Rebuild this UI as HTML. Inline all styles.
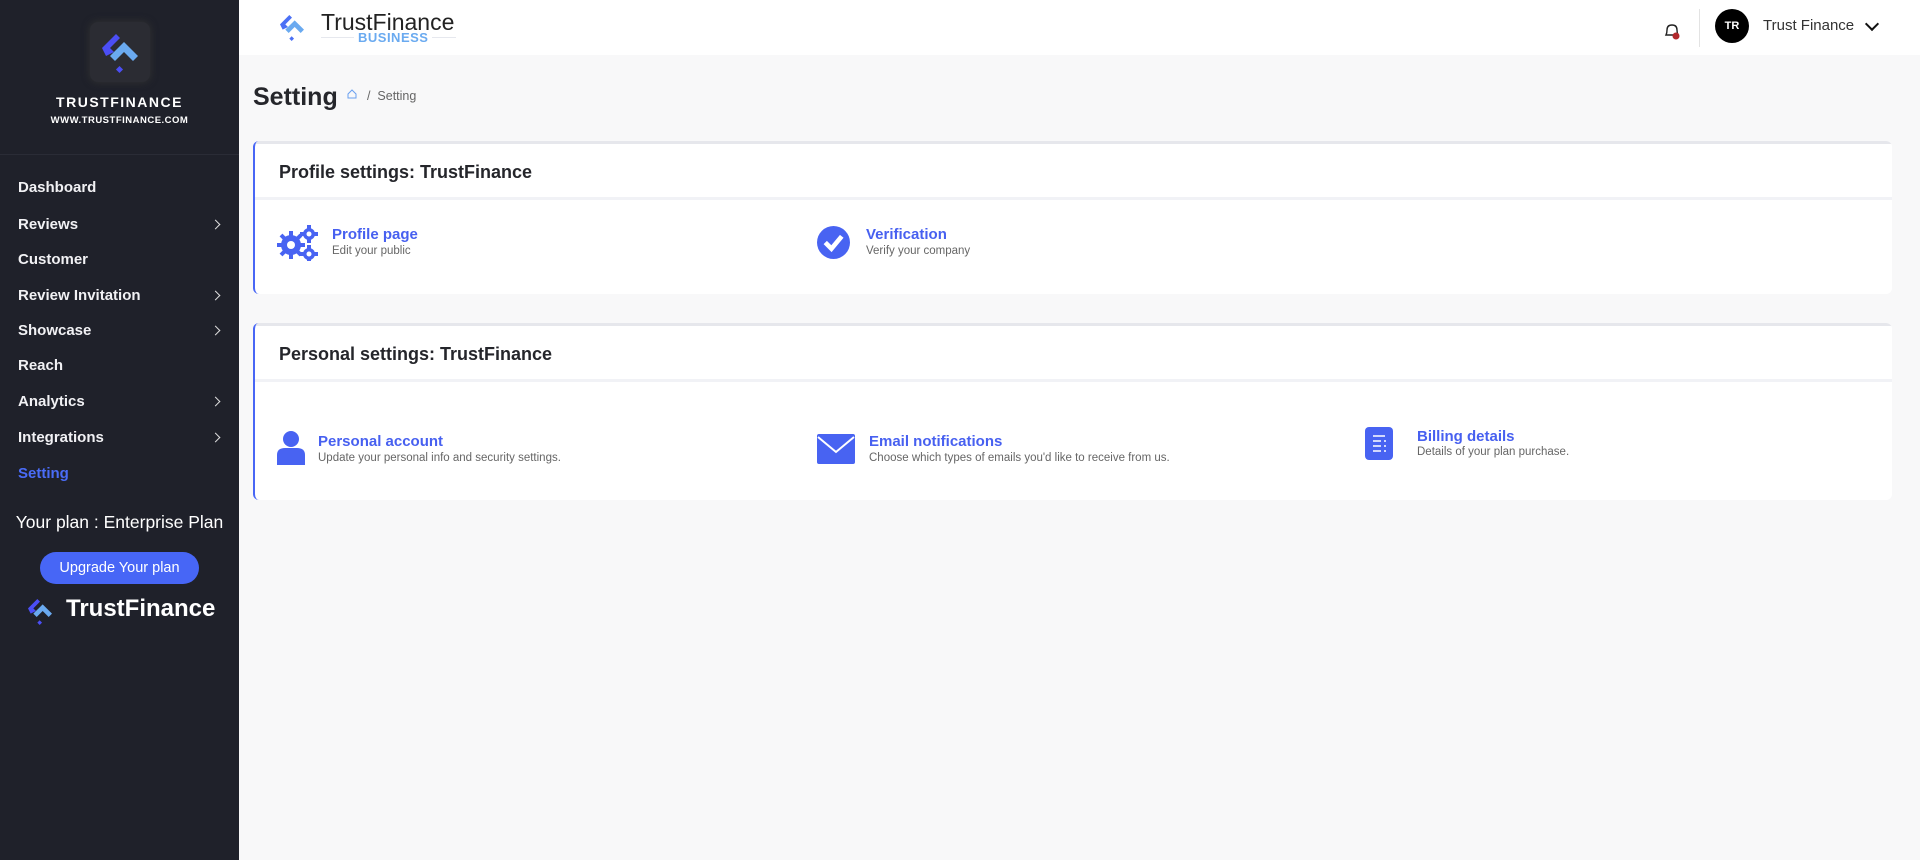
<!DOCTYPE html>
<html><head><meta charset="utf-8">
<style>
*{margin:0;padding:0;box-sizing:border-box}
body{width:1920px;height:860px;background:#f8f8f9;font-family:"Liberation Sans",sans-serif;position:relative;overflow:hidden}
.side{position:absolute;left:0;top:0;width:239px;height:860px;background:#1f212a;color:#fff}
.abs{position:absolute}
.menu div{position:absolute;left:18px;font-size:15px;font-weight:bold;color:#f1f1f4}
.chev{position:absolute;left:212px;width:7px;height:7px;border-right:1.6px solid #ddd;border-top:1.6px solid #ddd;transform:rotate(45deg)}
.top{position:absolute;left:239px;top:0;right:0;height:55px;background:#fff}
.card{position:absolute;left:253px;width:1639px;background:#fff;border-radius:6px;border-left:2px solid #4866f5;overflow:hidden}
.card .hd{height:59px;border-bottom:3px solid #f1f2f6;border-top:3px solid #e6e7ec;padding-left:24px;font-size:18px;font-weight:bold;color:#25262b;line-height:56px}
.t{position:absolute;font-size:15px;font-weight:bold;color:#4760f0}
.s{position:absolute;font-size:11.5px;color:#666}
</style></head><body>
<div class="side">
  <div class="abs" style="left:90px;top:22px;width:60px;height:60px;background:#2b2c33;border-radius:8px;box-shadow:0 0 8px #333"></div>
  <svg class="abs" style="left:96px;top:28px" width="48" height="48" viewBox="0 0 48 48">
    <path d="M6 20 L20 6 L24 10 L14 20 L18 24 L10 28 Z" fill="#4b4ef5"/>
    <path d="M14 28 L28 14 L42 28 L37 33 L28 24 L19 33 Z" fill="#6aaaf0"/>
    <rect x="21" y="39" width="5" height="5" transform="rotate(45 23.5 41.5)" fill="#4b4ef5"/>
  </svg>
  <div class="abs" style="left:0;width:239px;top:94px;text-align:center;font-size:14px;font-weight:bold;letter-spacing:1.5px">TRUSTFINANCE</div>
  <div class="abs" style="left:0;width:239px;top:115px;text-align:center;font-size:9.5px;font-weight:bold;letter-spacing:0.5px">WWW.TRUSTFINANCE.COM</div>
  <div class="abs" style="left:0;top:154px;width:239px;height:1px;background:#2a2c36"></div>
  <div class="menu">
    <div style="top:179px">Dashboard</div>
    <div style="top:216px">Reviews</div>
    <div style="top:251px">Customer</div>
    <div style="top:287px">Review Invitation</div>
    <div style="top:322px">Showcase</div>
    <div style="top:357px">Reach</div>
    <div style="top:393px">Analytics</div>
    <div style="top:429px">Integrations</div>
    <div style="top:465px;color:#4a6cf7">Setting</div>
  </div>
  <span class="chev" style="top:221px"></span>
  <span class="chev" style="top:292px"></span>
  <span class="chev" style="top:327px"></span>
  <span class="chev" style="top:398px"></span>
  <span class="chev" style="top:434px"></span>
  <div class="abs" style="left:0;width:239px;top:512px;text-align:center;font-size:17.5px">Your plan : Enterprise Plan</div>
  <div class="abs" style="left:40px;top:552px;width:159px;height:32px;border-radius:16px;background:#4766f6;text-align:center;line-height:32px;font-size:14.5px">Upgrade Your plan</div>
  <svg class="abs" style="left:24px;top:595px" width="32" height="32" viewBox="0 0 48 48">
    <path d="M6 20 L20 6 L24 10 L14 20 L18 24 L10 28 Z" fill="#4b4ef5"/>
    <path d="M14 28 L28 14 L42 28 L37 33 L28 24 L19 33 Z" fill="#6aaaf0"/>
    <rect x="21" y="39" width="5" height="5" transform="rotate(45 23.5 41.5)" fill="#4b4ef5"/>
  </svg>
  <div class="abs" style="left:66px;top:595px;font-size:24px;font-weight:bold">TrustFinance</div>
</div>
<div class="top">
  <svg class="abs" style="left:37px;top:11px" width="32" height="32" viewBox="0 0 48 48">
    <path d="M6 20 L20 6 L24 10 L14 20 L18 24 L10 28 Z" fill="#4b70f5"/>
    <path d="M14 28 L28 14 L42 28 L37 33 L28 24 L19 33 Z" fill="#6aaaf0"/>
    <rect x="21" y="39" width="5" height="5" transform="rotate(45 23.5 41.5)" fill="#4b70f5"/>
  </svg>
  <div class="abs" style="left:82px;top:9px;font-size:23px;color:#222">TrustFinance</div>
  <div class="abs" style="left:82px;top:37px;width:135px;height:1px;background:#e6e8ee"></div>
  <div class="abs" style="left:115px;top:30px;padding:0 4px;background:#fff;font-size:13px;font-weight:bold;color:#6aaaf0;letter-spacing:0.5px">BUSINESS</div>
  <svg class="abs" style="left:1423px;top:21px" width="20" height="20" viewBox="0 0 20 20"><path d="M4 14 Q5 12 5 9 Q5 4 10 4 Q15 4 15 9 Q15 12 16 14 Z" fill="none" stroke="#222" stroke-width="1.4"/><circle cx="14" cy="15" r="3.5" fill="#b1282c"/></svg>
  <div class="abs" style="left:1460px;top:9px;width:1px;height:38px;background:#e3e3e3"></div>
  <div class="abs" style="left:1476px;top:9px;width:34px;height:34px;border-radius:50%;background:#000;color:#fff;font-size:11px;font-weight:bold;text-align:center;line-height:34px">TR</div>
  <div class="abs" style="left:1524px;top:17px;font-size:15px;color:#333">Trust Finance</div>
  <div class="abs" style="left:1628px;top:19px;width:10px;height:10px;border-right:2px solid #111;border-bottom:2px solid #111;transform:rotate(45deg)"></div>
</div>
<div class="abs" style="left:253px;top:83px;font-size:25px;font-weight:bold;color:#25262b">Setting</div>
<svg class="abs" style="left:347px;top:89px" width="10" height="10" viewBox="0 0 10 10"><path d="M1 5 L5 1 L9 5 V9 H1 Z" fill="none" stroke="#6aa0f0" stroke-width="1"/></svg>
<div class="abs" style="left:367px;top:89px;font-size:12.5px;color:#666">/&nbsp; Setting</div>

<div class="card" style="top:141px;height:153px">
  <div class="hd">Profile settings: TrustFinance</div>
  <svg class="abs" style="left:22px;top:84px" width="42" height="36" viewBox="0 0 42 36"><g fill="#4863f2"><circle cx="14" cy="20" r="10"/><circle cx="32" cy="9" r="6"/><circle cx="32" cy="29" r="6"/></g><g stroke="#4863f2" stroke-width="4"><path d="M14 6v28M0 20h28M4 10l20 20M24 10L4 30"/><path d="M32 0v18M23 9h18M32 20v16M23 29h18"/></g><circle cx="14" cy="20" r="4" fill="#fff"/><circle cx="32" cy="9" r="2.5" fill="#fff"/><circle cx="32" cy="29" r="2.5" fill="#fff"/></svg>
  <div class="t" style="left:77px;top:85px">Profile page</div>
  <div class="s" style="left:77px;top:104px">Edit your public</div>
  <svg class="abs" style="left:562px;top:85px" width="33" height="33" viewBox="0 0 32 32"><circle cx="16" cy="16" r="16" fill="#4863f2"/><path d="M8 16 L14 22 L24 10" fill="none" stroke="#fff" stroke-width="4.5"/></svg>
  <div class="t" style="left:611px;top:85px">Verification</div>
  <div class="s" style="left:611px;top:104px">Verify your company</div>
</div>

<div class="card" style="top:323px;height:177px">
  <div class="hd">Personal settings: TrustFinance</div>
  <svg class="abs" style="left:22px;top:108px" width="28" height="34" viewBox="0 0 28 34"><circle cx="14" cy="8" r="8" fill="#4863f2"/><path d="M0 34 V24 Q0 17 8 17 H20 Q28 17 28 24 V34 Z" fill="#4863f2"/></svg>
  <div class="t" style="left:63px;top:110px">Personal account</div>
  <div class="s" style="left:63px;top:129px">Update your personal info and security settings.</div>
  <svg class="abs" style="left:562px;top:111px" width="38" height="30" viewBox="0 0 38 30"><rect width="38" height="30" rx="2" fill="#4863f2"/><path d="M1 3 L19 18 L37 3" fill="none" stroke="#fff" stroke-width="2"/></svg>
  <div class="t" style="left:614px;top:110px">Email notifications</div>
  <div class="s" style="left:614px;top:129px">Choose which types of emails you'd like to receive from us.</div>
  <svg class="abs" style="left:1110px;top:104px" width="28" height="33" viewBox="0 0 28 33"><rect width="28" height="33" rx="4" fill="#4863f2"/><g stroke="#fff" stroke-width="1.5"><path d="M8 9h12M8 14h8M8 19h8M8 24h8M19 14h2M19 19h2M19 24h2"/></g></svg>
  <div class="t" style="left:1162px;top:105px">Billing details</div>
  <div class="s" style="left:1162px;top:123px">Details of your plan purchase.</div>
</div>
</body></html>
